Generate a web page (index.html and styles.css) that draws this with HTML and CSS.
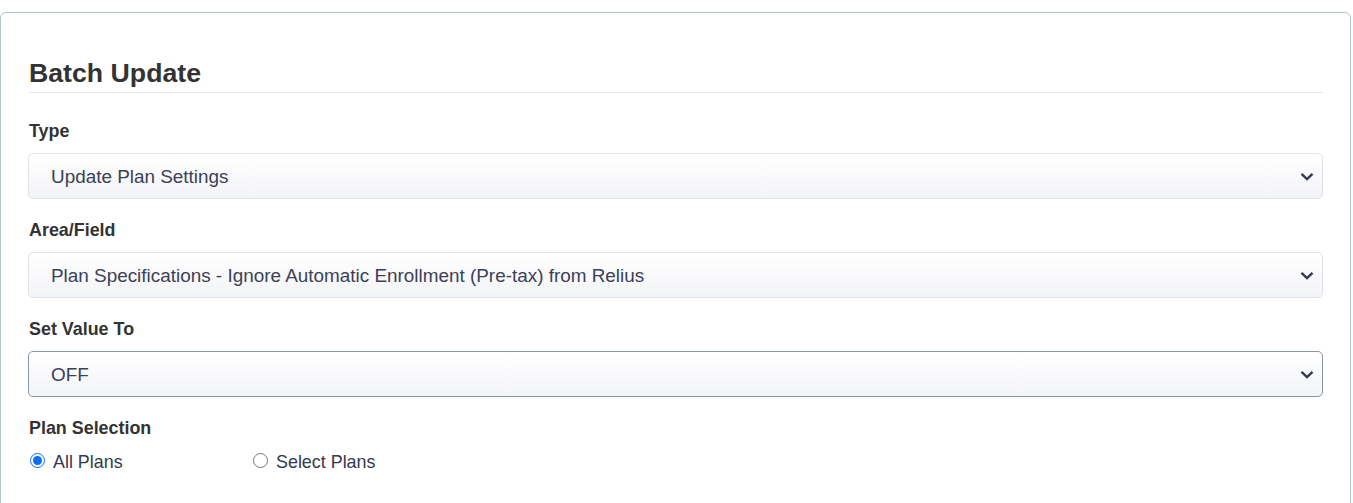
FILE: index.html
```html
<!DOCTYPE html>
<html lang="en">
<head>
<meta charset="utf-8">
<title>Batch Update</title>
<link rel="stylesheet" href="styles.css">
</head>
<body>
<div class="card">
  <h2 class="card-title">Batch Update</h2>
  <div class="field">
    <label class="field-label" for="type">Type</label>
    <select id="type" class="select">
      <option>Update Plan Settings</option>
    </select>
  </div>
  <div class="field">
    <label class="field-label" for="area">Area/Field</label>
    <select id="area" class="select">
      <option>Plan Specifications - Ignore Automatic Enrollment (Pre-tax) from Relius</option>
    </select>
  </div>
  <div class="field">
    <label class="field-label" for="value">Set Value To</label>
    <select id="value" class="select select-active">
      <option>OFF</option>
    </select>
  </div>
  <div class="field">
    <div class="field-label">Plan Selection</div>
    <div class="radio-row">
      <label class="radio-opt"><input type="radio" name="plans" checked>All Plans</label>
      <label class="radio-opt"><input type="radio" name="plans">Select Plans</label>
    </div>
  </div>
</div>
</body>
</html>
```

FILE: styles.css
```css
html, body {
  margin: 0;
  padding: 0;
  background: #ffffff;
}

body {
  font-family: "Liberation Sans", Arial, sans-serif;
  color: #333333;
  padding-top: 12px;
}

.card {
  width: 1295px;
  border: 1px solid #b3c6cc;
  border-radius: 6px;
  padding: 27px 27px 20px 27px;
  height: 460px;
  box-sizing: content-box;
}

.card-title {
  margin: 17px 0 0 1px;
  font-size: 26.7px;
  line-height: 32px;
  font-weight: 700;
  color: #333333;
  padding-bottom: 3px;
  border-bottom: 1px solid #e6e8ea;
}

.field {
  margin-top: 26px;
}

.field + .field {
  margin-top: 19px;
}

.field-label {
  display: block;
  font-size: 17.9px;
  line-height: 24px;
  font-weight: 700;
  color: #333333;
  margin: 0 0 10px 1px;
}

.select {
  display: block;
  width: 100%;
  height: 46px;
  box-sizing: border-box;
  -webkit-appearance: none;
  appearance: none;
  border: 1px solid #dfe2e8;
  border-radius: 5px;
  padding: 0 40px 0 22px;
  font-family: "Liberation Sans", Arial, sans-serif;
  font-size: 18.9px;
  color: #3b4157;
  background-color: #f7f8fa;
  background-image:
    url("data:image/svg+xml;utf8,<svg xmlns='http://www.w3.org/2000/svg' width='14' height='9' viewBox='0 0 14 9'><path d='M1.5 1.8 L7 7 L12.5 1.8' fill='none' stroke='%23343a4f' stroke-width='2.4'/></svg>"),
    linear-gradient(#ffffff, #f3f4f7);
  background-repeat: no-repeat, no-repeat;
  background-position: right 8px center, 0 0;
  background-size: 14px 9px, 100% 100%;
  outline: none;
}

.select-active {
  border-color: #8a95a6;
}

.radio-row {
  display: grid;
  grid-template-columns: 223px auto;
  justify-content: start;
  margin-top: 3px;
}

.radio-opt {
  display: flex;
  align-items: center;
  font-size: 17.9px;
  line-height: 24px;
  color: #333a4d;
}

.radio-opt input {
  width: 15px;
  height: 15px;
  margin: 0 8px 4px 2px;
  accent-color: #0b6ff0;
}
```
